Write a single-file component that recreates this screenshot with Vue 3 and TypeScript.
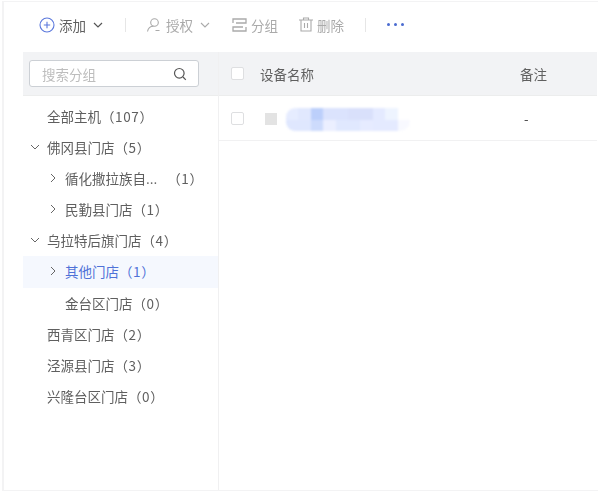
<script setup lang="ts">
interface TreeRow { label: string; count: string; level: number; arrow?: 'down' | 'right'; active?: boolean; gap?: boolean }
const rows: TreeRow[] = [
  { label: '全部主机', count: '（107）', level: 0 },
  { label: '佛冈县门店', count: '（5）', level: 0, arrow: 'down' },
  { label: '循化撒拉族自...', count: '（1）', level: 1, arrow: 'right', gap: true },
  { label: '民勤县门店', count: '（1）', level: 1, arrow: 'right' },
  { label: '乌拉特后旗门店', count: '（4）', level: 0, arrow: 'down' },
  { label: '其他门店', count: '（1）', level: 1, arrow: 'right', active: true },
  { label: '金台区门店', count: '（0）', level: 1 },
  { label: '西青区门店', count: '（2）', level: 0 },
  { label: '泾源县门店', count: '（3）', level: 0 },
  { label: '兴隆台区门店', count: '（0）', level: 0 }
]
const mosaic: string[] = [
  '#e6ecff', '#e1e8fe', '#bccffb', '#dbe3fd', '#dbe3fd', '#d9e0fb', '#d9e0fb', '#e4eaff', '#eef4ff', '#ffffff',
  '#dfe7fe', '#dfe7fe', '#cddbfc', '#ebefff', '#e0e8fe', '#e0e8fe', '#e6ebff', '#e4eaff', '#e4eaff', '#f8f9ff'
]
</script>

<template>
  <div class="page">
    <div class="frame">
      <div class="toolbar">
        <button class="tool primary">
          <svg width="16" height="16" viewBox="0 0 16 16" fill="none" stroke="#5b78dc" stroke-width="1.1"><circle cx="8" cy="8" r="7"/><path d="M8 4.8v6.4M4.8 8h6.4"/></svg>
          <span>添加</span>
          <svg class="caret" width="12" height="12" viewBox="0 0 12 12" fill="none" stroke="#555" stroke-width="1.2"><path d="M2 4l4 4 4-4"/></svg>
        </button>
        <i class="sep first"></i>
        <button class="tool auth">
          <svg width="16" height="16" viewBox="0 0 16 16" fill="none" stroke="#aaa" stroke-width="1.1"><circle cx="8.5" cy="5.5" r="3.8"/><path d="M1.5 14.5c.6-3.4 3-5.2 6-5.2M9.5 13.5h4"/></svg>
          <span>授权</span>
          <svg class="caret" width="12" height="12" viewBox="0 0 12 12" fill="none" stroke="#aaa" stroke-width="1.1"><path d="M2 4l4 4 4-4"/></svg>
        </button>
        <button class="tool group">
          <svg width="15" height="14" viewBox="0 0 15 14" fill="none" stroke="#aaa" stroke-width="1.3"><path d="M1 5V1h13v4H4M14 9v4H1V9h10"/></svg>
          <span>分组</span>
        </button>
        <button class="tool del">
          <svg width="14" height="15" viewBox="0 0 14 15" fill="none" stroke="#aaa" stroke-width="1.1"><path d="M0 3h14M4.5 3V1h5v2M2 3v11h10V3M5.5 6v5M8.5 6v5"/></svg>
          <span>删除</span>
        </button>
        <i class="sep second"></i>
        <span class="dots"><b></b><b></b><b></b></span>
      </div>

      <div class="content">
        <aside class="side">
          <div class="side-head">
            <div class="search">
              <span>搜索分组</span>
              <svg width="14" height="14" viewBox="0 0 14 14" fill="none" stroke="#555" stroke-width="1.2"><circle cx="6.3" cy="6.3" r="4.8"/><path d="M10 10l2.8 2.8"/></svg>
            </div>
          </div>
          <ul class="tree">
            <li v-for="r in rows" :key="r.label" class="row" :class="[`lv${r.level}`, { active: r.active }]">
              <svg v-if="r.arrow" class="arrow" width="10" height="10" viewBox="0 0 10 10" fill="none" stroke="#666" stroke-width="1">
                <path v-if="r.arrow === 'down'" d="M1 3l4 4 4-4"/>
                <path v-else d="M3 1l4 4-4 4"/>
              </svg>
              <span class="name" :class="{ gap: r.gap }">{{ r.label }}</span><span class="count">{{ r.count }}</span>
            </li>
          </ul>
        </aside>

        <section class="table">
          <div class="thead">
            <span class="check"></span>
            <span class="col-name">设备名称</span>
            <span class="col-note">备注</span>
          </div>
          <div class="trow">
            <span class="check"></span>
            <span class="thumb"></span>
            <div class="mosaic">
              <span v-for="(c, i) in mosaic" :key="i" :style="{ background: c }"></span>
            </div>
            <span class="note">-</span>
          </div>
        </section>
      </div>
    </div>
  </div>
</template>

<style>
html, body { margin: 0; background: #fff; }
</style>

<style scoped>
.page {
  width: 600px;
  height: 492px;
  box-sizing: border-box;
  overflow: hidden;
  padding: 1px 2px;
  font-family: "Noto Sans CJK SC", sans-serif;
  font-size: 13.5px;
  color: #5f5f5f;
  filter: blur(0.35px);
}
.frame {
  height: 100%;
  box-sizing: border-box;
  display: flex;
  flex-direction: column;
  border-top: 1px solid #f3f3f4;
  border-left: 2px solid #f3f3f4;
  border-bottom: 1px solid #f3f3f4;
}
.toolbar {
  height: 50px;
  flex: none;
  display: flex;
  align-items: center;
  padding: 0 0 5px 35px;
  box-sizing: border-box;
}
.tool {
  display: flex;
  align-items: center;
  padding: 0;
  border: 0;
  background: none;
  font: inherit;
  color: #aaa;
  gap: 4px;
}
.tool.primary { color: #5f5f5f; }
.caret { margin-left: 2px; }
.sep { width: 1px; height: 14px; background: #e6e6e6; }
.sep.first { margin: 0 20px 0 21px; }
.auth { margin-right: 21px; }
.group { margin-right: 21px; }
.sep.second { margin: 0 21px; }
.dots { display: flex; gap: 4px; }
.dots b { width: 3px; height: 3px; border-radius: 50%; background: #4a6bd0; }
.content { flex: 1; display: flex; margin-left: 19px; min-height: 0; }
.side { width: 195px; flex: none; border-right: 1px solid #f0f0f1; }
.side-head {
  height: 44px;
  box-sizing: border-box;
  background: #f2f3f5;
  border-bottom: 1px solid #eceded;
  padding: 8px 19px 0 6px;
}
.search {
  height: 27px;
  box-sizing: border-box;
  border: 1px solid #ccd0d5;
  border-radius: 3px;
  background: #fff;
  display: flex;
  align-items: center;
  justify-content: space-between;
  padding: 0 11px 0 12px;
  color: #bdbdbd;
}
.tree { list-style: none; margin: 5px 0 0; padding: 0; }
.row {
  position: relative;
  height: 31.1px;
  line-height: 31px;
  white-space: nowrap;
}
.row.lv0 { padding-left: 24px; }
.row.lv1 { padding-left: 42px; }
.row.active { background: #f5f8fe; color: #4f72d8; }
.arrow { position: absolute; top: 10px; }
.lv0 .arrow { left: 7px; }
.lv1 .arrow { left: 25px; }
.name.gap { margin-right: 10px; }
.count { letter-spacing: 0.6px; }
.table { flex: 1; min-width: 0; margin-right: 1px; }
.thead {
  height: 44px;
  box-sizing: border-box;
  background: #f2f3f5;
  border-bottom: 1px solid #eceded;
  display: flex;
  align-items: center;
  padding-left: 12px;
}
.check {
  width: 13px;
  height: 13px;
  flex: none;
  border: 1px solid #dedfe1;
  border-radius: 2px;
  background: #fff;
  box-sizing: border-box;
}
.col-name { margin-left: 16px; }
.col-note { margin-left: 206px; }
.trow {
  height: 45px;
  box-sizing: border-box;
  border-bottom: 1px solid #f1f1f2;
  display: flex;
  align-items: center;
  padding-left: 12px;
}
.thumb { width: 12px; height: 12px; margin-left: 21px; margin-top: 1px; background: #e3e3e3; flex: none; }
.mosaic {
  width: 124px;
  height: 23px;
  margin-left: 9px;
  margin-top: 3px;
  display: grid;
  grid-template-columns: repeat(10, 1fr);
  grid-template-rows: 1fr 1fr;
  border-radius: 9px 0 10px 9px;
  overflow: hidden;
  flex: none;
  filter: blur(0.8px);
}
.note { margin-left: 114px; font-size: 13px; color: #444; }
</style>
